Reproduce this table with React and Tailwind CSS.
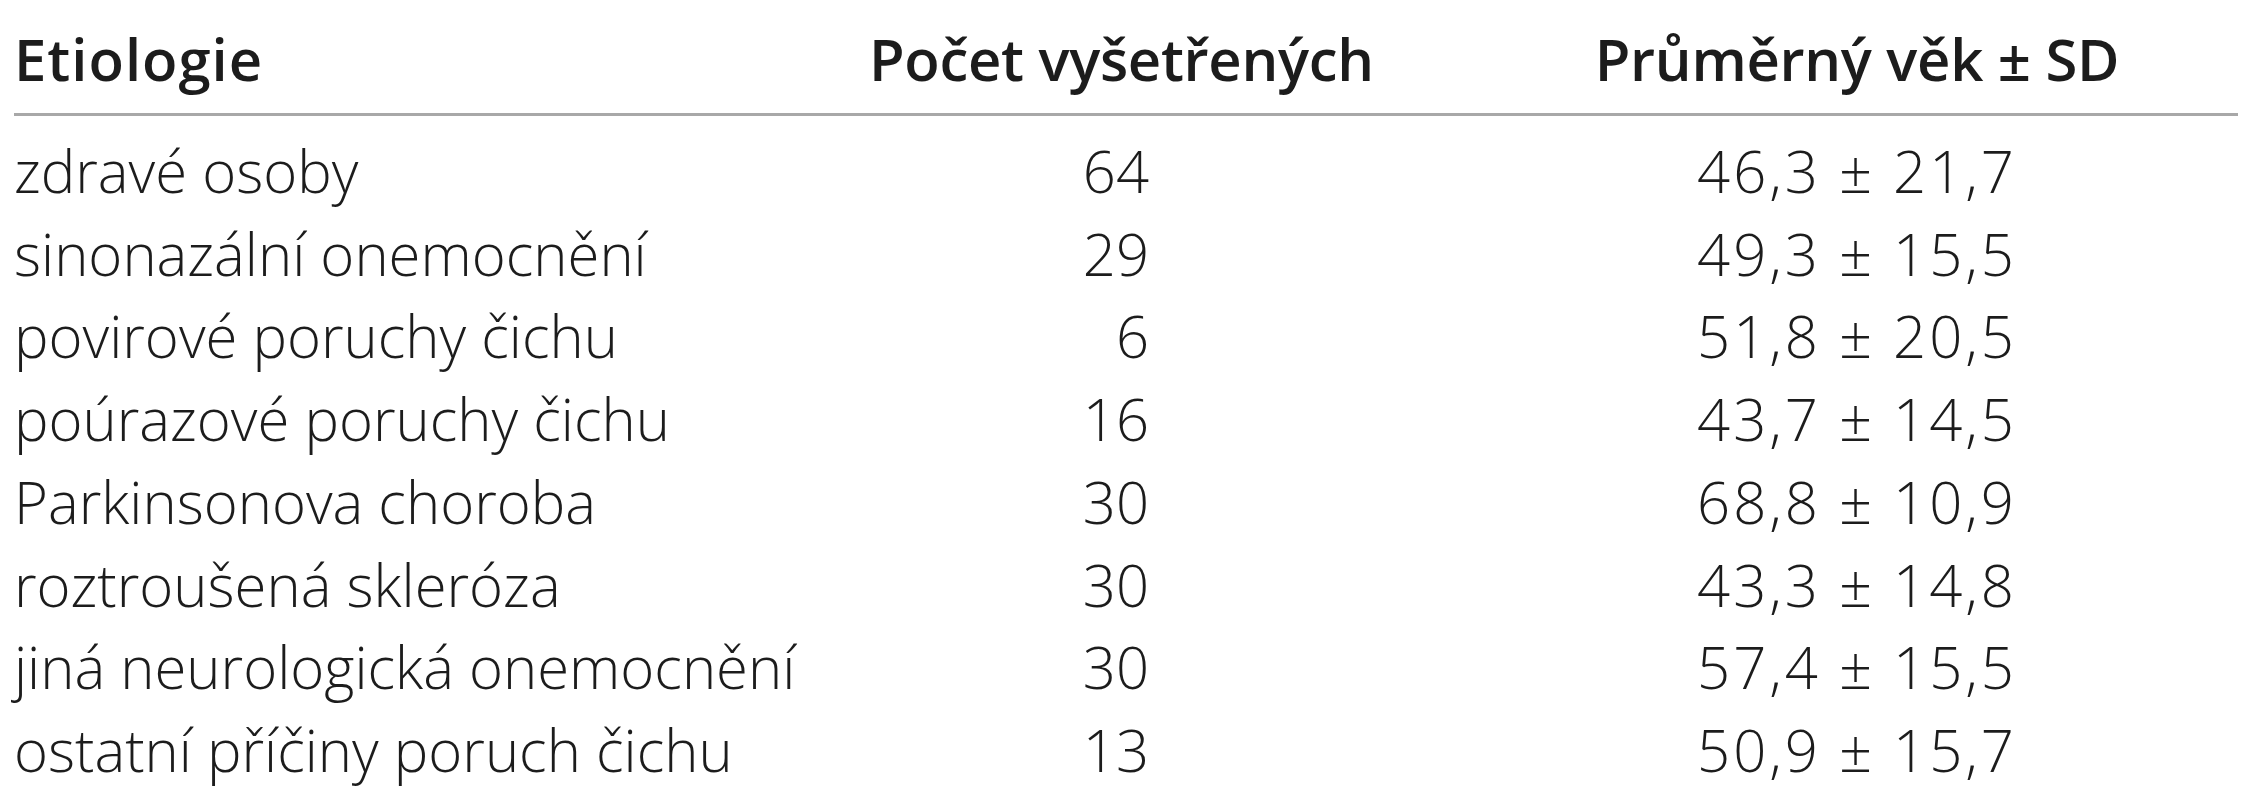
import React from 'react';

const rows = [
  ['zdravé osoby', '64', '46,3 ± 21,7'],
  ['sinonazální onemocnění', '29', '49,3 ± 15,5'],
  ['povirové poruchy čichu', '6', '51,8 ± 20,5'],
  ['poúrazové poruchy čichu', '16', '43,7 ± 14,5'],
  ['Parkinsonova choroba', '30', '68,8 ± 10,9'],
  ['roztroušená skleróza', '30', '43,3 ± 14,8'],
  ['jiná neurologická onemocnění', '30', '57,4 ± 15,5'],
  ['ostatní příčiny poruch čichu', '13', '50,9 ± 15,7'],
];

const App = () => {
  return (
    <div
      className="w-[2256px] h-[800px] overflow-hidden bg-white text-[#1c1c1c] pl-[14px] pr-[18px] whitespace-nowrap"
      style={{ fontFamily: '"Open Sans", "Noto Sans", sans-serif' }}
    >
      {/* hlavička */}
      <div className="flex pt-[18px] pb-[13px] text-[58px] leading-[82px] font-[580] tracking-[-0.3px] border-b-[3px] border-[#a8a8a8]">
        <div className="w-[855px] shrink-0 tracking-[1px]">Etiologie</div>
        <div className="w-[492px] shrink-0">Počet vyšetřených</div>
        <div className="w-[620px] shrink-0 ml-[186px] text-center">Průměrný věk ± SD</div>
      </div>

      {/* data */}
      <div className="pt-[14px] text-[58px] leading-[82.7px] font-[350]">
        {rows.map(([name, count, age]) => (
          <div key={name} className="flex">
            <div className="w-[855px] shrink-0">{name}</div>
            <div className="w-[492px] shrink-0 text-right pr-[212px]">{count}</div>
            <div className="w-[620px] shrink-0 ml-[186px] text-center tracking-[3px]">{age}</div>
          </div>
        ))}
      </div>
    </div>
  );
};

export default App;
